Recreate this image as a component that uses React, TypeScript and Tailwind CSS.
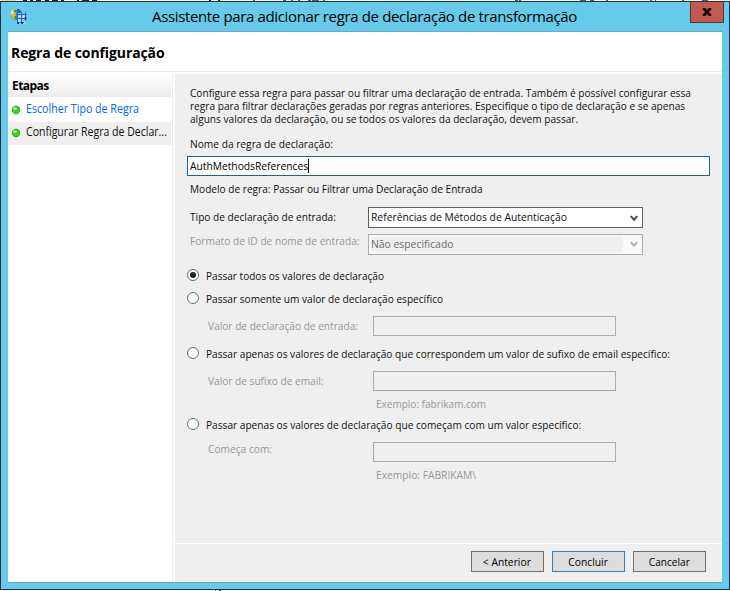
import type { ReactNode } from 'react';

function TopEdge() {
  return (
    <svg className="block h-px w-[730px]" width="730" height="1" shapeRendering="crispEdges">
      <rect width="730" height="1" fill="#f4f3ee" />
      <rect x="2" width="14" height="1" fill="#f3d68a" />
      <path d="M23 .5h4m3 0h3m3 0h5m4 0h4m3 0h6m3 0h3m13 0h2m3 0h7m3 0h5m112 0h2m7 0h2" stroke="#222" strokeWidth="1" />
      <path d="M253 .5h2m28 0h3m5 0h2m5 0h2m8 0h3m3 0h5m4 0h2m190 0h3m62 0h6m4 0h4m12 0h2m42 0h2m30 0h2m18 0h6" stroke="#5c5f48" strokeWidth="1" />
      <path d="M284 .5h2m12 0h2m12 0h2m205 0h2m63 0h2m6 0h2m61 0h1m46 0h2" stroke="#3454b8" strokeWidth="1" />
    </svg>
  );
}

function AppIcon() {
  return (
    <svg className="block" width="17" height="17" viewBox="0 0 17 17">
      <circle cx="6" cy="6" r="5.600" fill="#3c93d8" />
      <path d="M.6 4.500C1.600 2 4 .4 6.500.5L7.500 2 5 4 2.300 7.500.6 7Z" fill="#e9e6a0" />
      <path d="M1.200 6.500 5 4.500 7.500 7 5.500 11.500C3 11 1.400 9 1.200 6.500Z" fill="#f5b51d" />
      <path d="M4.500 8 7.500 7 7 12 4.500 11.200Z" fill="#2e9c40" />
      <path d="M3 2.600 6 1.200 7.500 3 4.800 4.600Z" fill="#2f9a50" />
      <path d="M7 .6c2.400.4 4.300 2.400 4.600 4.700L7.500 5Z" fill="#1f62c0" />
      <path d="M7 5h9v11H7z" fill="#8ecbf2" />
      <path d="M6 6.500h10.500M6 10.500h10.500M7 14.500h7M7.500 5v10.500M11.500 4v12M15.500 4v9" stroke="#2468c2" strokeWidth="1" />
      <path d="M8.500 7.500h2v2h-2zM12.500 7.500h2v2h-2zM8.500 11.500h2v2h-2z" fill="#cfe8fb" />
      <path d="M7 14h2v2H7zM11 14h2v2h-2zM14.500 9.500h2v2h-2z" fill="#123f95" />
    </svg>
  );
}

function Bullet() {
  return (
    <svg className="block shrink-0" width="10" height="10" viewBox="0 0 10 10">
      <circle cx="5" cy="5" r="4.200" fill="#2fae1c" />
      <circle cx="5" cy="5.200" r="3.200" fill="#44cc22" />
      <ellipse cx="4" cy="3.500" rx="2" ry="1.500" fill="#a5ef8e" />
    </svg>
  );
}

function Chevron({ className }: { className: string }) {
  return (
    <svg className={`block ${className}`} width="8" height="7" viewBox="0 0 8 7" fill="none" stroke="currentColor" strokeWidth="2">
      <path d="M.8 1.200 4 4.700 7.200 1.200" />
    </svg>
  );
}

/* Condensed run of text; className carries the horizontal scale. */
function T({ children, className }: { children: ReactNode; className: string }) {
  return <span className={`block w-max origin-left ${className}`}>{children}</span>;
}

function Radio({ children, checked = false, className, scale }: { children: ReactNode; checked?: boolean; className: string; scale: string }) {
  return (
    <div className={`flex h-[14px] items-start ${className}`}>
      <span className="flex size-3 shrink-0 items-center justify-center rounded-full border border-[#6b6b6b] bg-white">
        {checked && <span className="size-[6px] rounded-full bg-[#1c1c1c]" />}
      </span>
      <T className={`ml-[7px] leading-[14px] ${scale}`}>{children}</T>
    </div>
  );
}

function DisabledField({ label, labelClass, className }: { label: string; labelClass: string; className: string }) {
  return (
    <div className={`flex h-5 items-start pl-[21px] ${className}`}>
      <span className="w-[165px] shrink-0 text-[#989898]">
        <T className={labelClass}>{label}</T>
      </span>
      <span className="h-5 w-[243px] border border-[#abadad] bg-[#efefef]" />
    </div>
  );
}

function Button({ children, className, scale }: { children: ReactNode; className: string; scale: string }) {
  return (
    <button className={`flex h-[21px] w-[73px] items-center justify-center border bg-[#dddddd] leading-[19px] text-black ${className}`}>
      <span className={scale}>{children}</span>
    </button>
  );
}

export default function App() {
  return (
    <div className="flex h-[591px] w-[730px] flex-col overflow-hidden bg-white font-['Open_Sans','Noto_Sans',sans-serif] text-[12px] whitespace-nowrap text-[#101010]">
      <TopEdge />
      <div className="flex h-[589px] flex-col border border-[#26323c] bg-[#66caea]">
        <header className="flex h-[29px] shrink-0 items-start">
          <div className="w-[151px] shrink-0 pt-[6px] pl-[9px]">
            <AppIcon />
          </div>
          <h1 className="w-[538px] text-[15px] leading-[29px] tracking-[-0.356px] text-black">
            Assistente para adicionar regra de declaração de transformação
          </h1>
          <button className="flex h-[21px] w-[34px] shrink-0 items-center justify-center border border-t-0 border-[#5b3437] bg-[#c35a50]">
            <svg width="10" height="8" viewBox="0 0 10 8" stroke="#000" strokeWidth="2.600">
              <path d="M1.300 0 8.700 8M8.700 0 1.300 8" />
            </svg>
          </button>
        </header>

        <div className="mx-[7px] flex h-[552px] shrink-0 flex-col border-y border-[#64a9cc] bg-white">
          <div className="flex h-10 shrink-0 items-start border-b border-[#ececec] pl-[3px]">
            <h2 className="pt-[11px] text-[14px] leading-5 font-bold tracking-[-0.102px] text-black">Regra de configuração</h2>
          </div>

          <div className="mt-[2px] flex min-h-0 flex-1">
            <nav className="w-[165px] shrink-0 border-r border-[#ececec]">
              <h3 className="h-[23px] w-[163px] bg-linear-to-b from-white to-[#ececec] pl-1 leading-[23px] font-bold tracking-[-0.55px] text-black">
                Etapas
              </h3>
              <div className="flex h-[25px] w-[163px] items-start pl-[3px] text-[#0066ee]">
                <span className="pt-[8px]">
                  <Bullet />
                </span>
                <T className="ml-[5px] scale-x-[0.8876] leading-[24px]">Escolher Tipo de Regra</T>
              </div>
              <div className="flex h-[23px] w-[163px] items-start bg-[#efefef] pl-[3px]">
                <span className="pt-[6px]">
                  <Bullet />
                </span>
                <span className="ml-[5px] w-[145px]">
                  <T className="scale-x-[0.878] leading-[20px]">Configurar Regra de Declar...</T>
                </span>
              </div>
            </nav>

            <div className="ml-[2px] flex w-[547px] flex-col bg-[#efefef] text-[11.5px] font-medium">
              <main className="h-[469px] shrink-0 pt-[12px] pl-[12px]">
                <p className="origin-left scale-x-[0.8802] pl-[3.4px] leading-[13px]">
                  <span className="tracking-[-0.01px]">Configure essa regra para passar ou filtrar uma declaração de entrada. Também é possível configurar essa</span>
                  <br />
                  regra para filtrar declarações geradas por regras anteriores. Especifique o tipo de declaração e se apenas
                  <br />
                  alguns valores da declaração, ou se todos os valores da declaração, devem passar.
                </p>

                <div className="mt-[11px] h-4 pl-[3px] leading-4">
                  <T className="scale-x-[0.887]">Nome da regra de declaração:</T>
                </div>
                <div className="mt-1 flex h-5 w-[523px] items-center border border-[#245f8d] bg-white pl-[1.5px] text-black">
                  <span className="w-[118.5px] shrink-0">
                    <T className="scale-x-[0.892] leading-[18px]">AuthMethodsReferences</T>
                  </span>
                  <span className="h-[14px] w-px bg-black" />
                </div>
                <div className="mt-[5px] h-4 pl-[3px] leading-4">
                  <T className="scale-x-[0.8795]">Modelo de regra: Passar ou Filtrar uma Declaração de Entrada</T>
                </div>

                <div className="mt-[10px] flex h-[21px] pl-[3px]">
                  <span className="w-[178px] shrink-0 leading-[20px]">
                    <T className="scale-x-[0.8817]">Tipo de declaração de entrada:</T>
                  </span>
                  <span className="flex w-[275px] items-start justify-between border border-[#5f5f5f] bg-white pr-[4px] pl-[2px]">
                    <span className="w-[200px] leading-[18px]">
                      <T className="scale-x-[0.898]">Referências de Métodos de Autenticação</T>
                    </span>
                    <Chevron className="mt-[7px] text-[#444444]" />
                  </span>
                </div>
                <div className="mt-[6px] flex h-[21px] pl-[3px] text-[#989898]">
                  <span className="w-[178px] shrink-0 leading-[14px]">
                    <T className="scale-x-[0.884]">Formato de ID de nome de entrada:</T>
                  </span>
                  <span className="flex w-[275px] items-center justify-between border border-[#abadad] bg-[#fafafa] pr-[4px] pl-[2px]">
                    <span className="h-[15px] w-[252px] bg-[#efefef] leading-[13px] text-[#6c6c6c]">
                      <T className="scale-x-[0.902]">Não especificado</T>
                    </span>
                    <Chevron className="text-[#b4b4b4]" />
                  </span>
                </div>

                <Radio checked className="mt-[14px]" scale="scale-x-[0.875]">Passar todos os valores de declaração</Radio>
                <Radio className="mt-[9px]" scale="scale-x-[0.8797]">Passar somente um valor de declaração específico</Radio>
                <DisabledField label="Valor de declaração de entrada:" labelClass="leading-5 scale-x-[0.882]" className="mt-[10px]" />
                <Radio className="mt-[11px]" scale="scale-x-[0.8803]">
                  Passar apenas os valores de declaração que correspondem um valor de sufixo de email específico:
                </Radio>
                <DisabledField label="Valor de sufixo de email:" labelClass="leading-5 scale-x-[0.88]" className="mt-[10px]" />
                <div className="mt-[6px] h-[14px] pl-[189px] leading-[14px] text-[#989898]">
                  <T className="scale-x-[0.871]">Exemplo: fabrikam.com</T>
                </div>
                <Radio className="mt-[7px]" scale="scale-x-[0.881]">
                  Passar apenas os valores de declaração que começam com um valor específico:
                </Radio>
                <DisabledField label="Começa com:" labelClass="leading-[14px] scale-x-[0.886]" className="mt-[10px]" />
                <div className="mt-[6px] h-[14px] pl-[189px] leading-[14px] text-[#989898]">
                  <T className="scale-x-[0.891]">Exemplo: FABRIKAM\</T>
                </div>
              </main>

              <footer className="flex flex-1 items-start justify-end gap-2 border-t border-white pt-[7px] pr-4">
                <Button className="border-[#707070] pr-px" scale="scale-x-[0.895]">&lt; Anterior</Button>
                <Button className="border-[#3c7fb1]" scale="scale-x-[0.893]">Concluir</Button>
                <Button className="border-[#707070] pr-px" scale="scale-x-[0.879]">Cancelar</Button>
              </footer>
            </div>
          </div>
        </div>
      </div>
      <svg className="block h-px" width="730" height="1" shapeRendering="crispEdges">
        <path d="M215 .5h1m3 0h2" stroke="#555" strokeWidth="1" />
      </svg>
    </div>
  );
}
